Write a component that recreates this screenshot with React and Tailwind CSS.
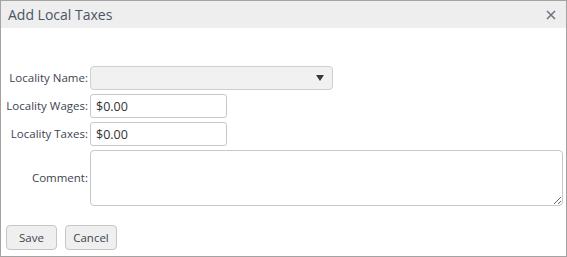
export default function App() {
  const label = 'w-[84px] shrink-0 whitespace-nowrap text-right text-[11.5px] text-[#3d4450]'
  const input =
    'h-[24px] rounded-[3px] border border-[#c8c8c8] bg-white px-[5px] text-[12.5px] text-[#333] outline-none'

  return (
    <div className="h-[257px] w-[567px] bg-white font-['Open_Sans',sans-serif]">
      <div className="flex h-full flex-col border border-[#a3a3a3]">
        {/* Header */}
        <div className="flex h-[27px] shrink-0 items-center justify-between bg-[#eeeeee] pl-[7px] pr-[10px]">
          <span className="text-[14px] text-[#4a5466]">Add Local Taxes</span>
          <svg viewBox="0 0 10 10" className="h-[10px] w-[10px]" stroke="#707080" strokeWidth="1.5">
            <path d="M1 1L9 9M9 1L1 9" />
          </svg>
        </div>

        {/* Form */}
        <div className="flex shrink-0 flex-col gap-[4px] pl-[3px] pr-[3px] pt-[38px]">
          <div className="flex items-center gap-[2px]">
            <span className={label}>Locality Name:</span>
            <div className="flex h-[24px] w-[243px] items-center justify-end rounded-[4px] border border-[#cfcfcf] bg-[#f1f1f1] pr-[8px]">
              <svg viewBox="0 0 8 6" className="h-[6px] w-[8px]">
                <path d="M0 0H8L4 6Z" fill="#3a3a3a" />
              </svg>
            </div>
          </div>
          <div className="flex items-center gap-[2px]">
            <span className={label}>Locality Wages:</span>
            <input readOnly value="$0.00" className={`${input} w-[137px]`} />
          </div>
          <div className="flex items-center gap-[2px]">
            <span className={label}>Locality Taxes:</span>
            <input readOnly value="$0.00" className={`${input} w-[137px]`} />
          </div>
          <div className="flex items-center gap-[2px]">
            <span className={label}>Comment:</span>
            <textarea readOnly className="block h-[56px] flex-1 rounded-[4px] border border-[#c8c8c8] bg-white outline-none" />
          </div>
        </div>

        {/* Buttons */}
        <div className="mt-[19px] flex shrink-0 gap-[8px] pl-[5px]">
          <button className="h-[25px] w-[51px] rounded-[4px] border border-[#c6c6c6] bg-[#efefef] text-[11.5px] text-[#3d4450]">
            Save
          </button>
          <button className="h-[25px] w-[52px] rounded-[4px] border border-[#c6c6c6] bg-[#efefef] text-[11.5px] text-[#3d4450]">
            Cancel
          </button>
        </div>
      </div>
    </div>
  )
}
